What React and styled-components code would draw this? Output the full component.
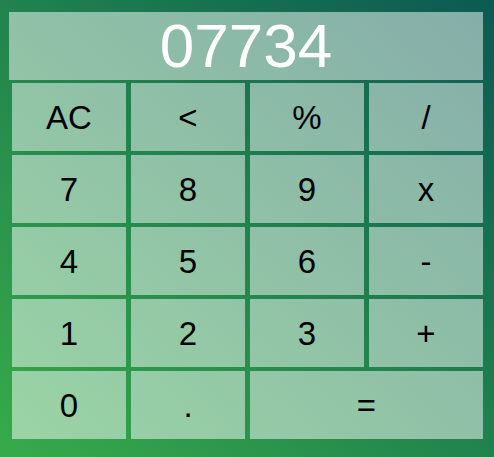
import styled, { createGlobalStyle } from 'styled-components';

const keys = [
    { label: 'AC' },
    { label: '<' },
    { label: '%' },
    { label: '/' },
    { label: '7' },
    { label: '8' },
    { label: '9' },
    { label: 'x' },
    { label: '4' },
    { label: '5' },
    { label: '6' },
    { label: '-' },
    { label: '1' },
    { label: '2' },
    { label: '3' },
    { label: '+' },
    { label: '0' },
    { label: '.' },
    { label: '=', span: 2 },
];

export default function App() {
    return (
        <>
            <GlobalStyle />
            <Wrapper>
                <Display>07734</Display>
                <Keypad>
                    {keys.map(k => (
                        <Key key={k.label} $span={k.span}>
                            {k.label}
                        </Key>
                    ))}
                </Keypad>
            </Wrapper>
        </>
    );
}

const GlobalStyle = createGlobalStyle`
    html, body {
        margin: 0;
        padding: 0;
    }
    body {
        font-family: "Liberation Sans", Arial, sans-serif;
    }
`;
const Wrapper = styled.div`
    width: 494px;
    height: 457px;
    box-sizing: border-box;
    padding: 12px 11px 0 9px;
    background: linear-gradient(to top right, #37ab4a, #0b5a53);
    display: flex;
    flex-direction: column;
`;
const Display = styled.div`
    height: 68px;
    margin-bottom: 3px;
    background: rgba(255, 255, 255, 0.5);
    color: #fff;
    font-size: 62px;
    display: flex;
    align-items: center;
    justify-content: center;
    line-height: 1;
`;
const Keypad = styled.div`
    margin-left: 3px;
    display: grid;
    grid-template-columns: repeat(4, 114px);
    grid-auto-rows: 68px;
    column-gap: 5px;
    row-gap: 4px;
`;
const Key = styled.button`
    grid-column: span ${props => props.$span || 1};
    border: none;
    padding: 1px 0 0;
    margin: 0;
    background: rgba(255, 255, 255, 0.5);
    color: #000;
    font-family: "Liberation Sans", Arial, sans-serif;
    font-size: 33px;
    display: flex;
    align-items: center;
    justify-content: center;
`;
